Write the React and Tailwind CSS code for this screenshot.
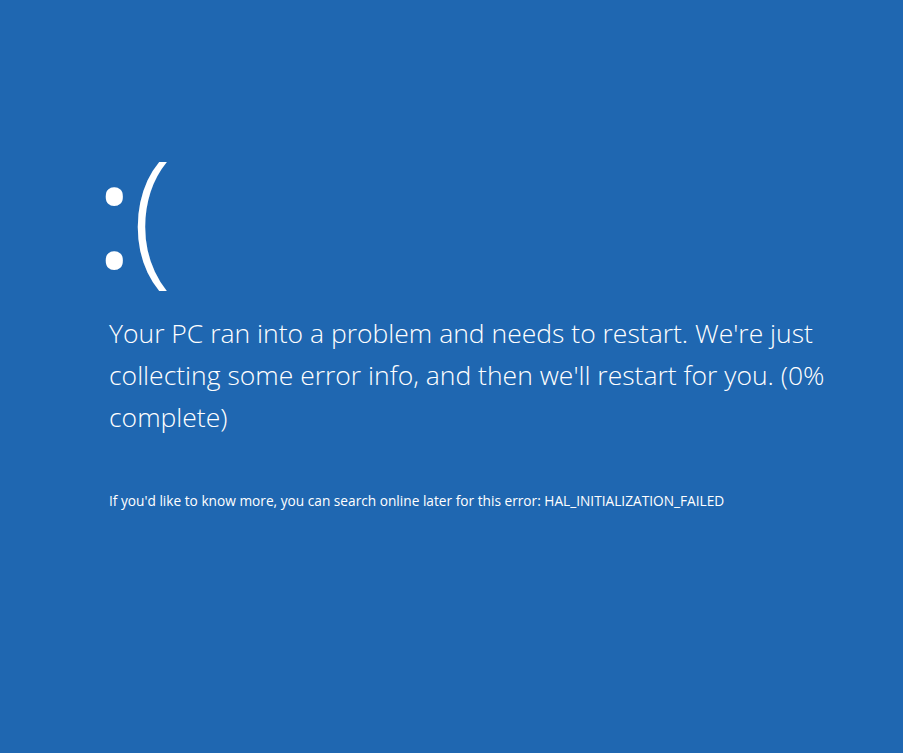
export default function App() {
  return (
    <div
      className="w-[903px] h-[753px] bg-[#1f67b1] text-white pl-[109px] pt-[138px] overflow-hidden"
      style={{ fontFamily: '"Open Sans", "Noto Sans", sans-serif' }}
    >
      <div className="text-[147px] leading-none -ml-[14px] flex items-baseline">
        <span className="font-normal">:</span>
        <span className="font-light -ml-[2px]">(</span>
      </div>

      <div className="mt-[27px] text-[26.5px] leading-[42px] font-light">
        <div>Your PC ran into a problem and needs to restart. We're just</div>
        <div>collecting some error info, and then we'll restart for you. (0%</div>
        <div>complete)</div>
      </div>

      <div className="mt-[54px] text-[13.7px] leading-[18px] font-normal">
        If you'd like to know more, you can search online later for this error: HAL_INITIALIZATION_FAILED
      </div>
    </div>
  );
}
